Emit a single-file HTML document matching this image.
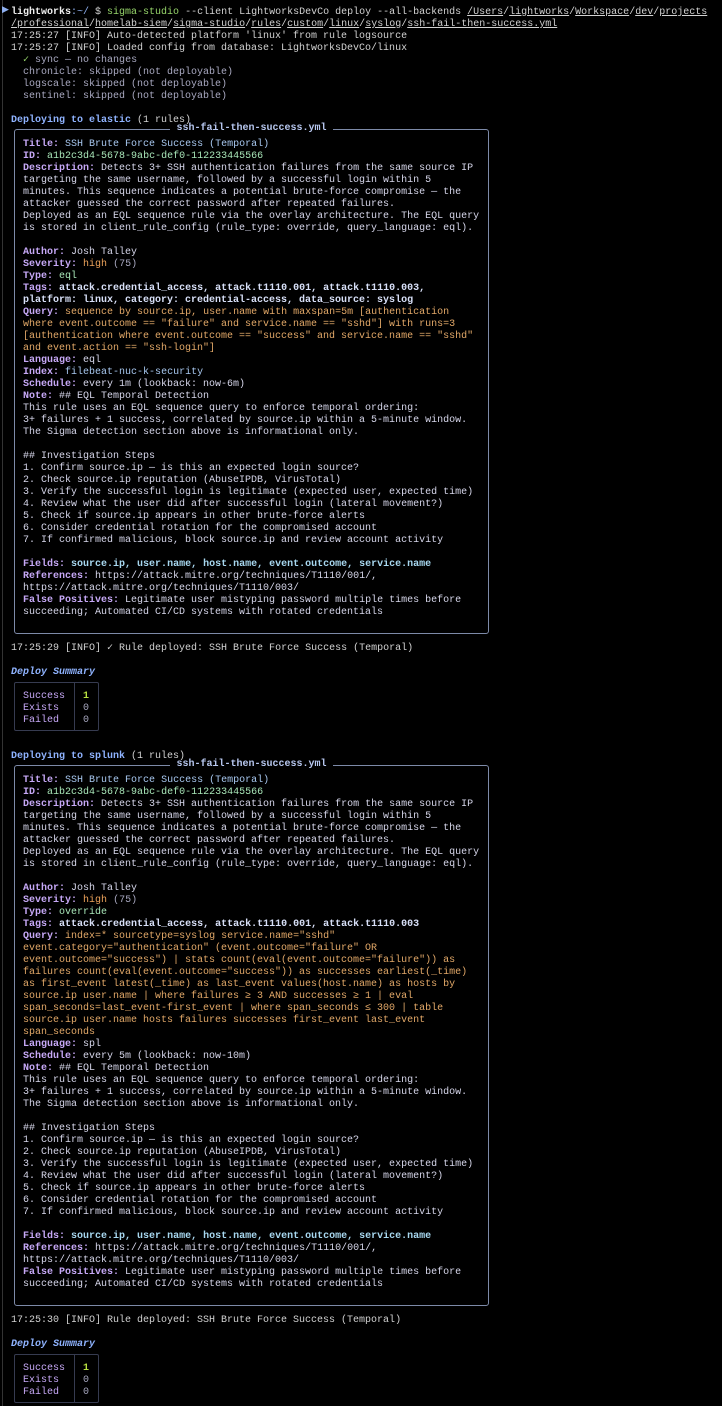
<!DOCTYPE html>
<html><head><meta charset="utf-8"><style>
html,body{margin:0;padding:0;background:#000;width:722px;height:1406px;overflow:hidden}
body{position:relative}
pre{position:absolute;left:11px;top:7px;margin:0;font-family:"Liberation Mono",monospace;font-size:10px;line-height:12px;color:#d2d2d2;white-space:pre}
.box{position:absolute;left:14px;width:473px;border:1.5px solid #7d8aa8;border-radius:3px}
.bt{position:absolute;top:-7px;left:0;right:0;text-align:center;font:bold 10px/12px "Liberation Mono",monospace;color:#b8c8f0}
.bt span{background:#000;padding:0 6px}
.tbl{position:absolute;left:14px;width:83px;height:47px;border:1.5px solid #363b50;border-radius:2px}
.tbl::after{content:"";position:absolute;left:59px;top:0;bottom:0;border-left:1.5px solid #363b50}
.L{color:#c6a8f6;font-weight:bold}
.w{color:#f0f0f0;font-weight:bold}
.bl{color:#8fb0f0}
.g{color:#96d46a}
.u{text-decoration:underline}
.gr{color:#a8a8c0}
.h{color:#8fb3ff;font-weight:bold}
.t{color:#a8c8f0}
.id{color:#a8e6b8}
.o{color:#eca25a}
.q{color:#e2a868}
.c{color:#a8d8f0;font-weight:bold}
.tg{color:#d8e0f8;font-weight:bold}
.in{color:#d6d6ea}
.sm{color:#8fb3ff;font-weight:bold;font-style:italic}
.y{color:#b8e040;font-weight:bold}
.lv{color:#c6a8f6}
.side{position:absolute;left:2px;top:0;bottom:0;border-left:1px solid #333}
</style></head><body>
<div class="side"></div>
<div style="position:absolute;left:2px;top:4px;color:#8fb0f0;font:9px/12px 'DejaVu Sans',sans-serif">▶</div>
<div class="box" style="top:129px;height:503px"><div class="bt"><span>ssh-fail-then-success.yml</span></div></div>
<div class="tbl" style="top:682px"></div>
<div class="box" style="top:765px;height:539px"><div class="bt"><span>ssh-fail-then-success.yml</span></div></div>
<div class="tbl" style="top:1354px"></div>
<pre><span class="w">lightworks</span><span class="bl">:~/</span> $ <span class="g">sigma-studio</span> --client LightworksDevCo deploy --all-backends <span class="u">/Users</span>/<span class="u">lightworks</span>/<span class="u">Workspace</span>/<span class="u">dev</span>/<span class="u">projects</span>
<span class="u">/professional</span>/<span class="u">homelab-siem</span>/<span class="u">sigma-studio</span>/<span class="u">rules</span>/<span class="u">custom</span>/<span class="u">linux</span>/<span class="u">syslog</span>/<span class="u">ssh-fail-then-success.yml</span>
17:25:27 [INFO] Auto-detected platform 'linux' from rule logsource
17:25:27 [INFO] Loaded config from database: LightworksDevCo/linux
  <span class="g">✓</span><span class="gr"> sync — no changes</span>
<span class="gr">  chronicle: skipped (not deployable)
  logscale: skipped (not deployable)
  sentinel: skipped (not deployable)</span>

<span class="h">Deploying to elastic</span> (1 rules)

<span class="in">  <span class="L">Title:</span> <span class="t">SSH Brute Force Success (Temporal)</span>
  <span class="L">ID:</span> <span class="id">a1b2c3d4-5678-9abc-def0-112233445566</span>
  <span class="L">Description:</span> Detects 3+ SSH authentication failures from the same source IP
  targeting the same username, followed by a successful login within 5
  minutes. This sequence indicates a potential brute-force compromise — the
  attacker guessed the correct password after repeated failures.
  Deployed as an EQL sequence rule via the overlay architecture. The EQL query
  is stored in client_rule_config (rule_type: override, query_language: eql).

  <span class="L">Author:</span> Josh Talley
  <span class="L">Severity:</span> <span class="o">high</span> <span class="gr">(75)</span>
  <span class="L">Type:</span> <span class="id">eql</span>
  <span class="L">Tags:</span> <span class="tg">attack.credential_access, attack.t1110.001, attack.t1110.003,
  platform: linux, category: credential-access, data_source: syslog</span>
  <span class="L">Query:</span> <span class="q">sequence by source.ip, user.name with maxspan=5m [authentication
  where event.outcome == "failure" and service.name == "sshd"] with runs=3
  [authentication where event.outcome == "success" and service.name == "sshd"
  and event.action == "ssh-login"]</span>
  <span class="L">Language:</span> eql
  <span class="L">Index:</span> <span class="t">filebeat-nuc-k-security</span>
  <span class="L">Schedule:</span> every 1m (lookback: now-6m)
  <span class="L">Note:</span> ## EQL Temporal Detection
  This rule uses an EQL sequence query to enforce temporal ordering:
  3+ failures + 1 success, correlated by source.ip within a 5-minute window.
  The Sigma detection section above is informational only.

  ## Investigation Steps
  1. Confirm source.ip — is this an expected login source?
  2. Check source.ip reputation (AbuseIPDB, VirusTotal)
  3. Verify the successful login is legitimate (expected user, expected time)
  4. Review what the user did after successful login (lateral movement?)
  5. Check if source.ip appears in other brute-force alerts
  6. Consider credential rotation for the compromised account
  7. If confirmed malicious, block source.ip and review account activity

  <span class="L">Fields:</span> <span class="c">source.ip, user.name, host.name, event.outcome, service.name</span>
  <span class="L">References:</span> https://attack.mitre.org/techniques/T1110/001/,
  https://attack.mitre.org/techniques/T1110/003/
  <span class="L">False Positives:</span> Legitimate user mistyping password multiple times before
  succeeding; Automated CI/CD systems with rotated credentials</span>


17:25:29 [INFO] ✓ Rule deployed: SSH Brute Force Success (Temporal)

<span class="sm">Deploy Summary</span>

  <span class="lv">Success</span>   <span class="y">1</span>
  <span class="lv">Exists</span>    <span class="gr">0</span>
  <span class="lv">Failed</span>    <span class="gr">0</span>


<span class="h">Deploying to splunk</span> (1 rules)

<span class="in">  <span class="L">Title:</span> <span class="t">SSH Brute Force Success (Temporal)</span>
  <span class="L">ID:</span> <span class="id">a1b2c3d4-5678-9abc-def0-112233445566</span>
  <span class="L">Description:</span> Detects 3+ SSH authentication failures from the same source IP
  targeting the same username, followed by a successful login within 5
  minutes. This sequence indicates a potential brute-force compromise — the
  attacker guessed the correct password after repeated failures.
  Deployed as an EQL sequence rule via the overlay architecture. The EQL query
  is stored in client_rule_config (rule_type: override, query_language: eql).

  <span class="L">Author:</span> Josh Talley
  <span class="L">Severity:</span> <span class="o">high</span> <span class="gr">(75)</span>
  <span class="L">Type:</span> <span class="id">override</span>
  <span class="L">Tags:</span> <span class="tg">attack.credential_access, attack.t1110.001, attack.t1110.003</span>
  <span class="L">Query:</span> <span class="q">index=* sourcetype=syslog service.name="sshd"
  event.category="authentication" (event.outcome="failure" OR
  event.outcome="success") | stats count(eval(event.outcome="failure")) as
  failures count(eval(event.outcome="success")) as successes earliest(_time)
  as first_event latest(_time) as last_event values(host.name) as hosts by
  source.ip user.name | where failures ≥ 3 AND successes ≥ 1 | eval
  span_seconds=last_event-first_event | where span_seconds ≤ 300 | table
  source.ip user.name hosts failures successes first_event last_event
  span_seconds</span>
  <span class="L">Language:</span> spl
  <span class="L">Schedule:</span> every 5m (lookback: now-10m)
  <span class="L">Note:</span> ## EQL Temporal Detection
  This rule uses an EQL sequence query to enforce temporal ordering:
  3+ failures + 1 success, correlated by source.ip within a 5-minute window.
  The Sigma detection section above is informational only.

  ## Investigation Steps
  1. Confirm source.ip — is this an expected login source?
  2. Check source.ip reputation (AbuseIPDB, VirusTotal)
  3. Verify the successful login is legitimate (expected user, expected time)
  4. Review what the user did after successful login (lateral movement?)
  5. Check if source.ip appears in other brute-force alerts
  6. Consider credential rotation for the compromised account
  7. If confirmed malicious, block source.ip and review account activity

  <span class="L">Fields:</span> <span class="c">source.ip, user.name, host.name, event.outcome, service.name</span>
  <span class="L">References:</span> https://attack.mitre.org/techniques/T1110/001/,
  https://attack.mitre.org/techniques/T1110/003/
  <span class="L">False Positives:</span> Legitimate user mistyping password multiple times before
  succeeding; Automated CI/CD systems with rotated credentials</span>


17:25:30 [INFO] Rule deployed: SSH Brute Force Success (Temporal)

<span class="sm">Deploy Summary</span>

  <span class="lv">Success</span>   <span class="y">1</span>
  <span class="lv">Exists</span>    <span class="gr">0</span>
  <span class="lv">Failed</span>    <span class="gr">0</span>
</pre>
</body></html>
